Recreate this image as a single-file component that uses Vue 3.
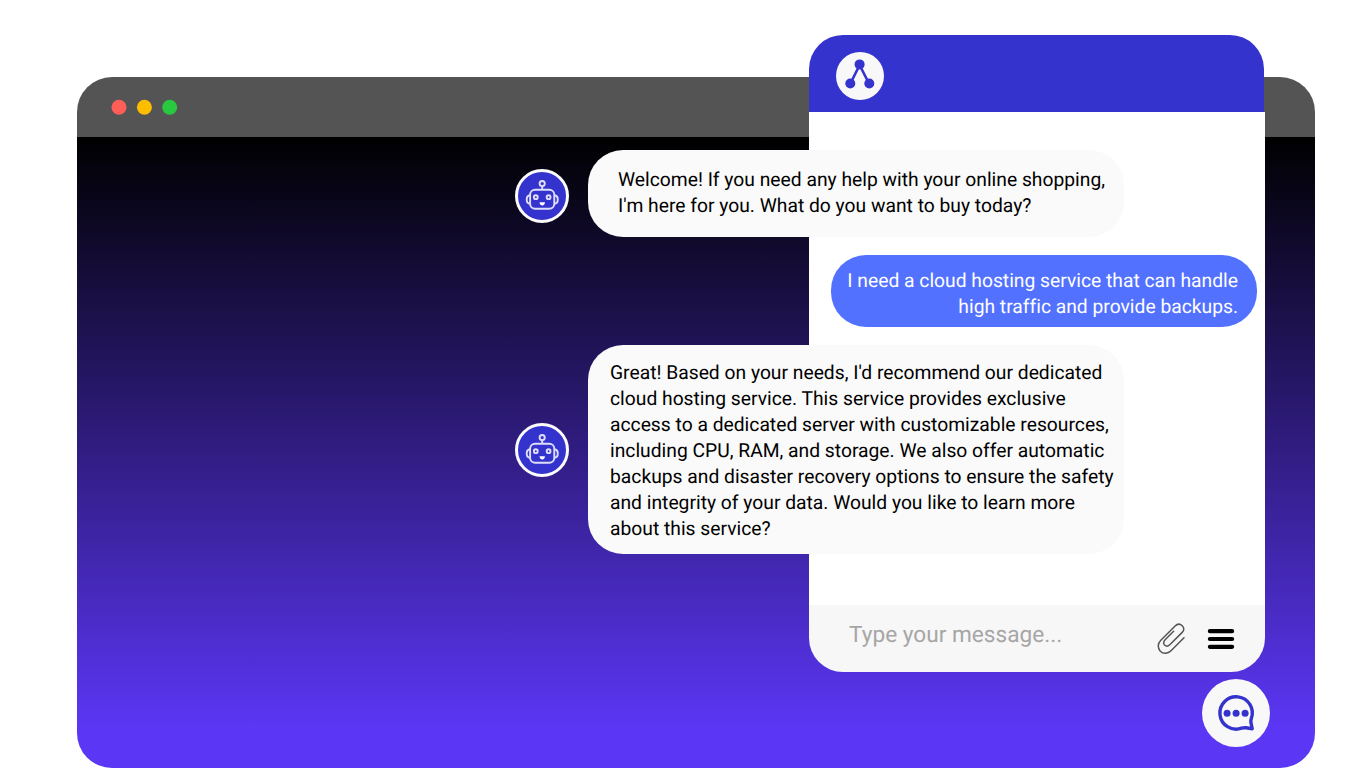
<template>
  <main class="stage">
    <section class="browser">
      <div class="titlebar">
        <svg viewBox="0 0 70 16" width="70" height="16">
          <circle cx="9" cy="8.2" r="7.5" fill="#ff5f57" />
          <circle cx="34.4" cy="8.2" r="7.5" fill="#ffbd00" />
          <circle cx="59.7" cy="8.2" r="7.5" fill="#28c941" />
        </svg>
      </div>
      <div class="viewport" />
    </section>

    <section class="chat">
      <header class="chat-header">
        <div class="logo">
          <svg viewBox="0 0 48 48" width="48" height="48">
            <path d="M23.6 13 L14.2 32 M23.6 13 L33.2 32" stroke="#3533cd" stroke-width="2.6" />
            <circle cx="23.6" cy="12.4" r="5" fill="#3533cd" />
            <circle cx="14.3" cy="31.5" r="5" fill="#3533cd" />
            <circle cx="33.3" cy="31.5" r="5" fill="#3533cd" />
          </svg>
        </div>
      </header>

      <div class="messages">
        <div v-for="message in messages" :key="message.id" :class="['message', message.from, message.id]">
          <div v-if="message.from === 'bot'" class="avatar">
            <svg viewBox="0 0 48 48" width="48" height="48" fill="none" stroke="#dedefa" stroke-width="1.9">
              <circle cx="24.2" cy="11.6" r="2.6" />
              <path d="M24.2 14.2 V17.6" />
              <rect x="12.1" y="17.8" width="24.2" height="18.9" rx="5" />
              <path d="M12.1 23.2 Q8.7 23.4 8.7 27.6 Q8.7 31.6 12.1 31.9 M36.3 23.2 Q39.8 23.4 39.8 27.6 Q39.8 31.6 36.3 31.9" />
              <circle cx="17.8" cy="25.2" r="1.9" />
              <circle cx="30.6" cy="25.2" r="1.9" />
              <path d="M21.5 30.2 H27 Q26.5 33.4 24.3 33.4 Q22 33.4 21.5 30.2 Z" fill="#fff" stroke="none" />
            </svg>
          </div>
          <div class="bubble">
            <p v-for="line in message.lines" :key="line">{{ line }}</p>
          </div>
        </div>
      </div>

      <footer class="composer">
        <span class="placeholder">Type your message...</span>
        <svg class="clip" viewBox="0 0 30 32" width="30" height="32" fill="none" stroke="#545454" stroke-width="1.5" stroke-linecap="round">
          <path d="M16.6 8.3 L8.1 16.8 C6.2 18.8 6.3 21 7.8 22.3 C9.2 23.5 11.3 23.2 12.8 21.8 L25.2 9.4 C27.5 7 27.1 4.6 25.2 2.8 C23.1 .8 20.3 .8 18.1 3 L3.8 17.2 C.6 20.5 .4 25 3.3 28.2 C6.3 31.2 11 30.8 14 27.8 L27 14.7" />
        </svg>
        <svg viewBox="0 0 28 22" width="28" height="22" stroke="#000" stroke-width="4.2" stroke-linecap="round">
          <path d="M2.9 3.2 H25.1 M2.9 11 H25.1 M2.9 18.8 H25.1" />
        </svg>
      </footer>
    </section>

    <div class="launcher">
      <svg viewBox="0 0 68 68" width="68" height="68">
        <path d="M49.3 39.5 A16.2 16.2 0 1 0 39.5 49.2 Q42.2 48.5 44 48.8 L50.2 49.7 L49 43.8 Q48.6 41.8 49.3 39.5 Z" fill="none" stroke="#3533cd" stroke-width="3.4" stroke-linejoin="round" />
        <circle cx="25.1" cy="34.2" r="3.5" fill="#3533cd" />
        <circle cx="34.1" cy="34.2" r="3.5" fill="#3533cd" />
        <circle cx="43.1" cy="34.2" r="3.5" fill="#3533cd" />
      </svg>
    </div>
  </main>
</template>

<script setup>
const messages = [
  {
    id: "welcome",
    from: "bot",
    lines: [
      "Welcome! If you need any help with your online shopping,",
      "I'm here for you. What do you want to buy today?",
    ],
  },
  {
    id: "request",
    from: "user",
    lines: [
      "I need a cloud hosting service that can handle",
      "high traffic and provide backups.",
    ],
  },
  {
    id: "answer",
    from: "bot",
    lines: [
      "Great! Based on your needs, I'd recommend our dedicated",
      "cloud hosting service. This service provides exclusive",
      "access to a dedicated server with customizable resources,",
      "including CPU, RAM, and storage. We also offer automatic",
      "backups and disaster recovery options to ensure the safety",
      "and integrity of your data. Would you like to learn more",
      "about this service?",
    ],
  },
];
</script>

<style>
body {
  overflow: hidden;
  background: #fff;
}
</style>

<style scoped>
.stage {
  position: relative;
  box-sizing: border-box;
  width: 1366px;
  height: 768px;
  padding: 77px 51px 0 77px;
  font-family: Roboto, "Liberation Sans", sans-serif;
  font-variant-ligatures: none;
  text-rendering: geometricPrecision;
}

.stage * {
  box-sizing: border-box;
}

.stage svg {
  display: block;
  flex: none;
}

.browser {
  height: 691px;
  border-radius: 35px;
  overflow: hidden;
}

.titlebar {
  height: 60px;
  padding-left: 33px;
  display: flex;
  align-items: center;
  background: #545454;
}

.viewport {
  height: 631px;
  background: linear-gradient(#000, #5b36f4 590px);
}

.chat {
  position: absolute;
  left: 809px;
  top: 35px;
  width: 456px;
  height: 637px;
  display: flex;
  flex-direction: column;
}

.chat-header {
  width: 455px;
  height: 77px;
  padding: 17px 27px;
  border-radius: 34px 34px 0 0;
  background: #3533cd;
}

.logo {
  width: 48px;
  height: 48px;
  border-radius: 50%;
  background: #f8f8f8;
}

.messages {
  flex: 1;
  display: flex;
  flex-direction: column;
  gap: 18px;
  padding-top: 38px;
  background: #fff;
}

.message {
  display: flex;
  align-items: center;
}

.bot {
  width: 609px;
  margin-left: -294px;
  gap: 19px;
}

.user {
  width: 426px;
  margin-left: 22px;
}

.avatar {
  width: 54px;
  height: 54px;
  flex: none;
  border: 3px solid #fcfcfc;
  border-radius: 50%;
  background: #3533cd;
}

.bubble {
  flex: 1;
  border-radius: 35px;
  background: #fafafa;
  color: #000;
  font-size: 19.28px;
  line-height: 26px;
  white-space: nowrap;
}

.bubble p {
  margin: 0;
}

.welcome .avatar {
  margin-top: 4px;
}

.welcome .bubble {
  height: 87px;
  padding: 17px 0 0 30px;
}

.request .bubble {
  height: 72px;
  padding: 13px 19px 0 0;
  background: #5271ff;
  color: #fff;
  text-align: right;
}

.answer .bubble {
  height: 209px;
  padding: 15px 0 0 22px;
}

.composer {
  height: 67px;
  display: flex;
  align-items: center;
  padding: 0 30px 0 40px;
  border-radius: 0 0 34px 34px;
  background: #f7f7f7;
}

.placeholder {
  flex: 1;
  padding-bottom: 8px;
  color: #a6a6a6;
  font-size: 22.65px;
  line-height: 28px;
}

.clip {
  margin-right: 20px;
}

.launcher {
  position: absolute;
  left: 1202px;
  top: 679px;
  width: 68px;
  height: 68px;
  border-radius: 50%;
  background: #f8f8f8;
}
</style>
